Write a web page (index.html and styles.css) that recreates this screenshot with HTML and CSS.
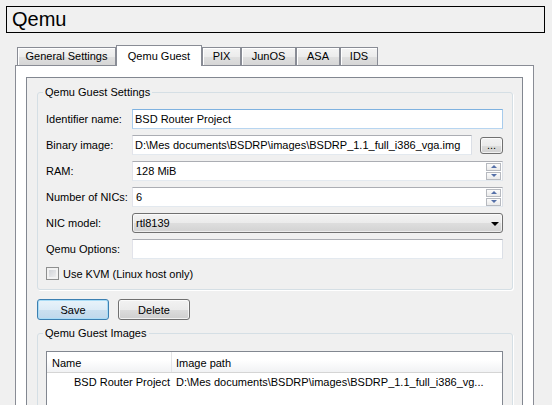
FILE: index.html
```html
<!DOCTYPE html>
<html lang="en">
<head>
    <meta charset="UTF-8">
    <title>Qemu</title>
    <link rel="stylesheet" href="styles.css">
</head>
<body>
<div class="title">Qemu</div>
<div class="tabs">
    <span class="tab tab-general">General Settings</span>
    <span class="tab tab-qemu active">Qemu Guest</span>
    <span class="tab tab-pix">PIX</span>
    <span class="tab tab-junos">JunOS</span>
    <span class="tab tab-asa">ASA</span>
    <span class="tab tab-ids">IDS</span>
</div>
<div class="pane">
    <div class="scroll">
        <fieldset class="group settings">
            <legend>Qemu Guest Settings</legend>
            <div class="row">
                <label>Identifier name:</label>
                <input class="field focus" value="BSD Router Project">
            </div>
            <div class="row">
                <label>Binary image:</label>
                <input class="field" value="D:\Mes documents\BSDRP\images\BSDRP_1.1_full_i386_vga.img">
                <button class="browse">...</button>
            </div>
            <div class="row">
                <label>RAM:</label>
                <div class="field spin">
                    <span class="value">128 MiB</span>
                    <span class="spinner"><span class="up"></span><span class="down"></span></span>
                </div>
            </div>
            <div class="row">
                <label>Number of NICs:</label>
                <div class="field spin">
                    <span class="value">6</span>
                    <span class="spinner"><span class="up"></span><span class="down"></span></span>
                </div>
            </div>
            <div class="row">
                <label>NIC model:</label>
                <div class="combo">
                    <span class="value">rtl8139</span>
                    <span class="caret"></span>
                </div>
            </div>
            <div class="row last">
                <label>Qemu Options:</label>
                <input class="field" value="">
            </div>
            <div class="check">
                <span class="box"></span>
                <span>Use KVM (Linux host only)</span>
            </div>
        </fieldset>
        <div class="actions">
            <button class="btn default">Save</button>
            <button class="btn">Delete</button>
        </div>
        <fieldset class="group images">
            <legend>Qemu Guest Images</legend>
            <div class="table">
                <div class="thead">
                    <span class="col-name">Name</span>
                    <span class="col-path">Image path</span>
                </div>
                <div class="trow">
                    <span class="col-name">BSD Router Project</span>
                    <span class="col-path">D:\Mes documents\BSDRP\images\BSDRP_1.1_full_i386_vg...</span>
                </div>
            </div>
        </fieldset>
    </div>
</div>
</body>
</html>
```

FILE: styles.css
```css
* {
    box-sizing: border-box;
}
body {
    background: #f0f0f0;
    color: #000;
    font-family: "Liberation Sans", Arial, sans-serif;
    font-size: 11px;
    height: 405px;
    margin: 0;
    overflow: hidden;
}
.title {
    border: solid 1px #000;
    font-size: 20px;
    height: 27px;
    line-height: 25px;
    margin: 6px 7px 0 6px;
    padding-left: 5px;
}
.tabs {
    align-items: flex-end;
    display: flex;
    height: 20px;
    margin: 12px 0 0 17px;
}
.tab {
    background: linear-gradient(#f4f4f4, #ececec 50%, #e0e0e0 50%, #d6d6d6);
    border: solid 1px #898c95;
    border-bottom: none;
    box-shadow: inset 1px 1px #fff;
    height: 18px;
    line-height: 17px;
    text-align: center;
}
.tab.active {
    background: #fff;
    box-shadow: none;
    height: 21px;
    margin-bottom: -1px;
    padding-top: 2px;
    position: relative;
    z-index: 1;
}
.tab-general { width: 99px; }
.tab-qemu { width: 86px; }
.tab-pix { width: 39px; }
.tab-junos { width: 55px; }
.tab-asa { width: 44px; }
.tab-ids { width: 38px; }
.pane {
    background: #fff;
    border: solid 1px #898c95;
    margin: 0 18px 0 15px;
    padding: 11px 10px 0 10px;
}
.scroll {
    background: #f0f0f0;
    border: solid 1px #828790;
    height: 400px;
    padding: 8px 9px 0 10px;
}
.group {
    border: solid 1px #d5dfe5;
    border-radius: 3px;
    box-shadow: 1px 1px 0 #fff;
    margin: 0;
    min-width: 0;
    padding: 10px 9px 9px 8px;
}
.group legend {
    line-height: 13px;
    margin-left: -3px;
    padding: 0 2px;
}
.row {
    align-items: center;
    display: flex;
    height: 20px;
    margin-bottom: 6px;
}
.row.last {
    margin-bottom: 8px;
}
.row label {
    flex: none;
    line-height: 13px;
    width: 86px;
}
.field {
    background: #fff;
    border: solid 1px;
    border-color: #abadb3 #dbdfe6 #e3e9ef #e2e3ea;
    color: #000;
    flex: 1;
    font: inherit;
    height: 20px;
    margin: 0;
    min-width: 0;
    outline: none;
    padding: 0 2px;
}
.field.focus {
    border-color: #7fb2e0 #a7cbec #b7d5f0 #a7cbec;
}
.browse {
    background: linear-gradient(#f2f2f2, #ebebeb 50%, #dddddd 50%, #cfcfcf);
    border: solid 1px #707070;
    border-radius: 3px;
    box-shadow: inset 0 0 0 1px rgba(255, 255, 255, 0.7);
    color: #000;
    flex: none;
    font: inherit;
    height: 17px;
    line-height: 12px;
    margin-left: 8px;
    padding: 0;
    width: 23px;
}
.spin {
    align-items: center;
    display: flex;
    padding-right: 0;
}
.spin .value {
    flex: 1;
    padding-left: 1px;
}
.spinner {
    display: flex;
    flex-direction: column;
    gap: 1px;
    margin-right: 1px;
}
.spinner span {
    align-items: center;
    background: linear-gradient(#fbfbfb, #eaeaea);
    border: solid 1px #b6b9bf;
    display: flex;
    height: 8px;
    justify-content: center;
    width: 15px;
}
.spinner span::after {
    border-left: 3px solid transparent;
    border-right: 3px solid transparent;
    content: "";
}
.spinner .up::after {
    border-bottom: 3px solid #5570a8;
}
.spinner .down::after {
    border-top: 3px solid #5570a8;
}
.combo {
    align-items: center;
    background: linear-gradient(#f3f3f3, #ebebeb 50%, #dedede 50%, #d2d2d2);
    border: solid 1px #707070;
    border-radius: 3px;
    box-shadow: inset 0 0 0 1px rgba(255, 255, 255, 0.6);
    display: flex;
    flex: 1;
    height: 20px;
    padding: 0 3px 0 3px;
}
.combo .value {
    flex: 1;
}
.caret {
    border-left: 4px solid transparent;
    border-right: 4px solid transparent;
    border-top: 4px solid #000;
    margin-top: 1px;
}
.check {
    align-items: center;
    display: flex;
    gap: 4px;
    height: 13px;
}
.check .box {
    background: linear-gradient(135deg, #c9ccd1, #f4f4f4);
    border: solid 1px #8e8f8f;
    box-shadow: inset 0 0 0 2px #f2f2f2;
    height: 13px;
    width: 13px;
}
.actions {
    display: flex;
    gap: 9px;
    margin: 9px 0 7px 0;
}
.btn {
    background: linear-gradient(#f2f2f2, #ebebeb 50%, #dddddd 50%, #cfcfcf);
    border: solid 1px #707070;
    border-radius: 3px;
    box-shadow: inset 0 0 0 1px rgba(255, 255, 255, 0.7);
    color: #000;
    font: inherit;
    height: 21px;
    padding: 0;
    width: 72px;
}
.btn.default {
    background: linear-gradient(#e8f3fa, #dcebf6 50%, #cbe0f0 50%, #bfd8ec);
    border-color: #3c7fb1;
    box-shadow: inset 0 0 0 1px #a9dcf6;
}
.images {
    padding-top: 11px;
}
.table {
    background: #fff;
    border: solid 1px #828790;
    height: 90px;
}
.thead {
    background: linear-gradient(#fff 40%, #f1f2f4);
    border-bottom: solid 1px #d5d5d5;
    display: flex;
    height: 21px;
    line-height: 22px;
}
.thead .col-name {
    border-right: solid 1px #e3e4e6;
    padding-left: 5px;
}
.trow {
    display: flex;
    height: 19px;
    line-height: 19px;
}
.trow .col-name {
    padding-right: 2px;
    text-align: right;
}
.col-name {
    flex: none;
    width: 125px;
}
.col-path {
    padding-left: 4px;
    white-space: nowrap;
}
```
